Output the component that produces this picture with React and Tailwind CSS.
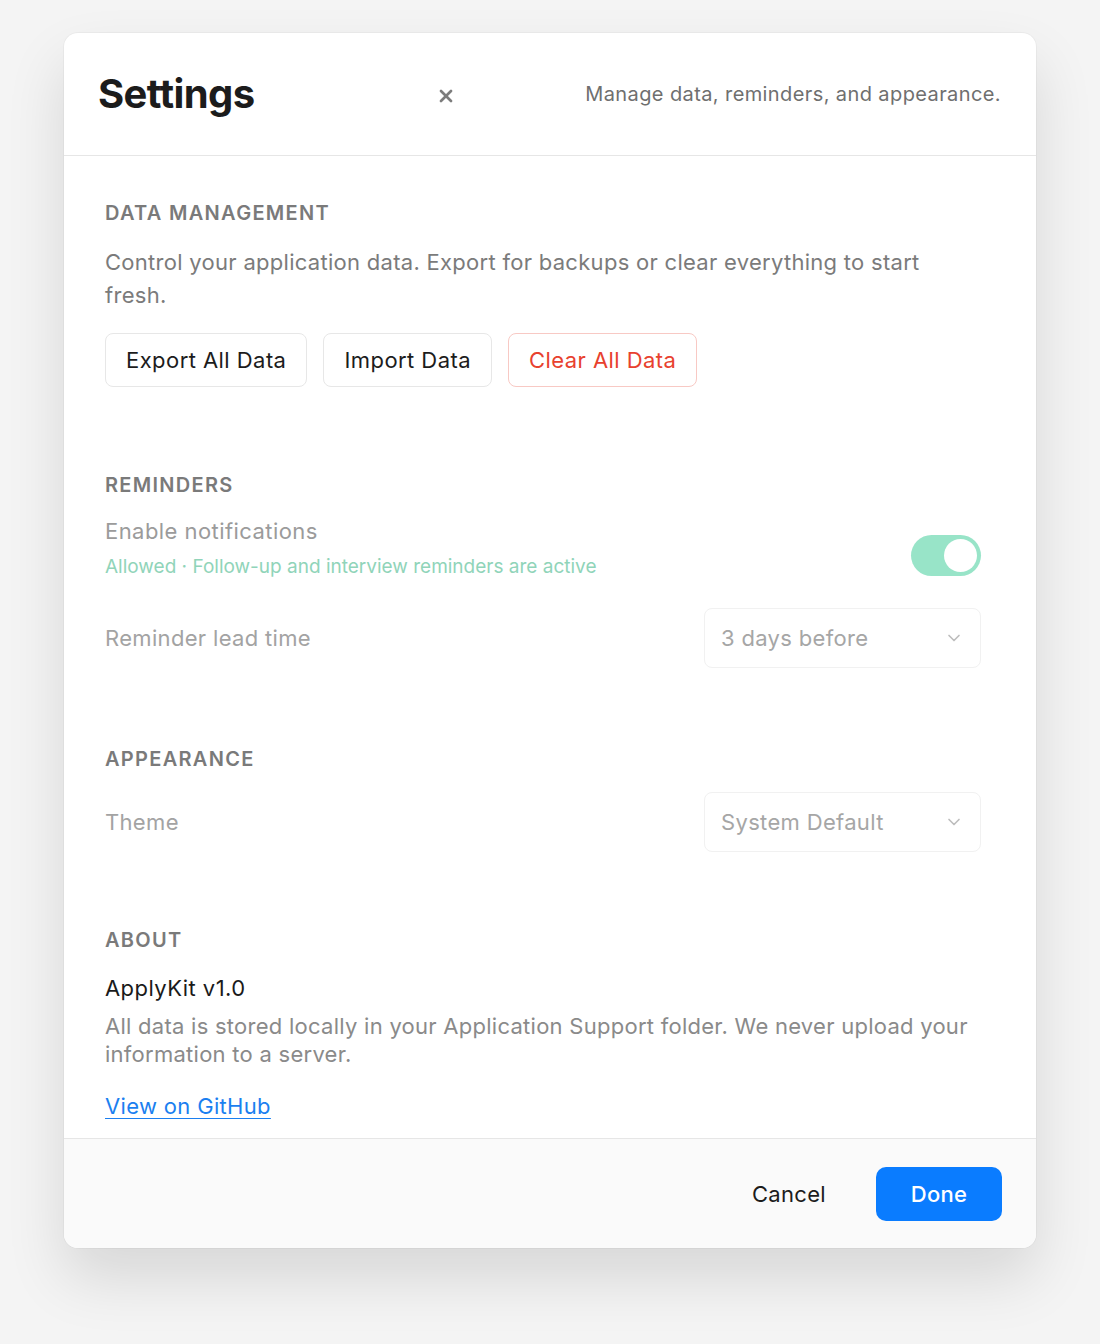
import { ChevronDown, X } from "lucide-react";

// select look-alike
function Select({ value }) {
  return (
    <div className="flex h-[60px] w-[277px] items-center justify-between rounded-lg border border-[#f1f1f1] bg-white pl-4 pr-4">
      <span className="text-[22px] tracking-[0.015em] text-[#a6a6a6]">{value}</span>
      <ChevronDown className="h-5 w-5 text-[#bdbdbd]" strokeWidth={2} />
    </div>
  );
}

function SectionTitle({ children }) {
  return (
    <h2 className="text-[20px] font-semibold uppercase leading-7 tracking-[0.065em] text-[#7a7a7a]">
      {children}
    </h2>
  );
}

export default function App() {
  return (
    <div
      className="min-h-[1344px] bg-[#f4f4f4] pt-[33px]"
      style={{ fontFamily: "Inter, 'Noto Sans', sans-serif" }}
    >
      <div className="mx-auto w-[972px] overflow-hidden rounded-[14px] bg-white shadow-[0_30px_60px_rgba(0,0,0,0.12),0_0_0_1px_rgba(0,0,0,0.03)]">
        {/* header */}
        <div className="flex h-[123px] items-center border-b border-[#e6e6e6] pl-[34px] pr-[35px]">
          <h1 className="w-[338px] text-[40px] font-bold tracking-[-0.015em] text-[#1c1c1c]">Settings</h1>
          <button type="button" className="mt-1 text-[#7d7d7d]">
            <X className="h-5 w-5" strokeWidth={3.2} />
          </button>
          <p className="ml-auto text-[20px] tracking-[0.02em] text-[#6f6f6f]">Manage data, reminders, and appearance.</p>
        </div>

        {/* body */}
        <div className="pl-[41px] pr-[55px] pb-[17px] pt-[43px]">
          <section>
            <SectionTitle>Data Management</SectionTitle>
            <p className="mt-[19px] w-[850px] text-[22px] leading-[33px] tracking-[0.013em] text-[#7b7b7b]">
              Control your application data. Export for backups or clear everything to start fresh.
            </p>
            <div className="mt-[21px] flex gap-4">
              <button type="button" className="h-[54px] rounded-lg border border-[#e7e7e7] px-5 text-[22px] tracking-[0.02em] text-[#1c1c1c]">
                Export All Data
              </button>
              <button type="button" className="h-[54px] rounded-lg border border-[#e7e7e7] px-5 text-[22px] tracking-[0.02em] text-[#1c1c1c]">
                Import Data
              </button>
              <button type="button" className="h-[54px] rounded-lg border border-[#f8c9c4] px-5 text-[22px] tracking-[0.02em] text-[#e8412e]">
                Clear All Data
              </button>
            </div>
          </section>

          <section className="mt-[84px]">
            <SectionTitle>Reminders</SectionTitle>
            <div className="mt-[17px] flex items-center justify-between">
              <div>
                <div className="text-[22px] leading-[30px] tracking-[0.02em] text-[#9b9b9b]">Enable notifications</div>
                <div className="mt-[8px] text-[19px] leading-[26px] text-[#90d4b9]">
                  Allowed · Follow-up and interview reminders are active
                </div>
              </div>
              <div className="mt-[14px] flex h-[41px] w-[70px] items-center justify-end rounded-full bg-[#98e4c8] pr-1">
                <div className="h-[33px] w-[33px] rounded-full bg-white" />
              </div>
            </div>
            <div className="mt-[28px] flex items-center justify-between">
              <span className="text-[22px] tracking-[0.015em] text-[#a3a3a3]">Reminder lead time</span>
              <Select value="3 days before" />
            </div>
          </section>

          <section className="mt-[77px]">
            <SectionTitle>Appearance</SectionTitle>
            <div className="mt-[19px] flex items-center justify-between">
              <span className="text-[22px] tracking-[0.015em] text-[#a3a3a3]">Theme</span>
              <Select value="System Default" />
            </div>
          </section>

          <section className="mt-[74px]">
            <SectionTitle>About</SectionTitle>
            <div className="mt-[19px] text-[22px] leading-[30px] tracking-[0.02em] text-[#1a1a1a]">ApplyKit v1.0</div>
            <p className="mt-[9px] text-[22px] leading-[28px] tracking-[0.012em] text-[#8a8a8a]">
              All data is stored locally in your Application Support folder. We never upload your information to a server.
            </p>
            <a href="#" className="mt-[23px] inline-block text-[22px] leading-[30px] tracking-[0.015em] text-[#1b7ff0] underline decoration-1 underline-offset-4">
              View on GitHub
            </a>
          </section>
        </div>

        {/* footer */}
        <div className="flex items-center justify-end gap-[50px] border-t border-[#e6e6e6] bg-[#fafafa] pb-[27px] pl-8 pr-[34px] pt-[28px]">
          <button type="button" className="text-[22px] tracking-[0.015em] text-[#1c1c1c]">Cancel</button>
          <button type="button" className="h-[54px] w-[126px] rounded-[10px] bg-[#0a7cff] text-[22px] font-medium tracking-[0.015em] text-white">
            Done
          </button>
        </div>
      </div>
    </div>
  );
}
